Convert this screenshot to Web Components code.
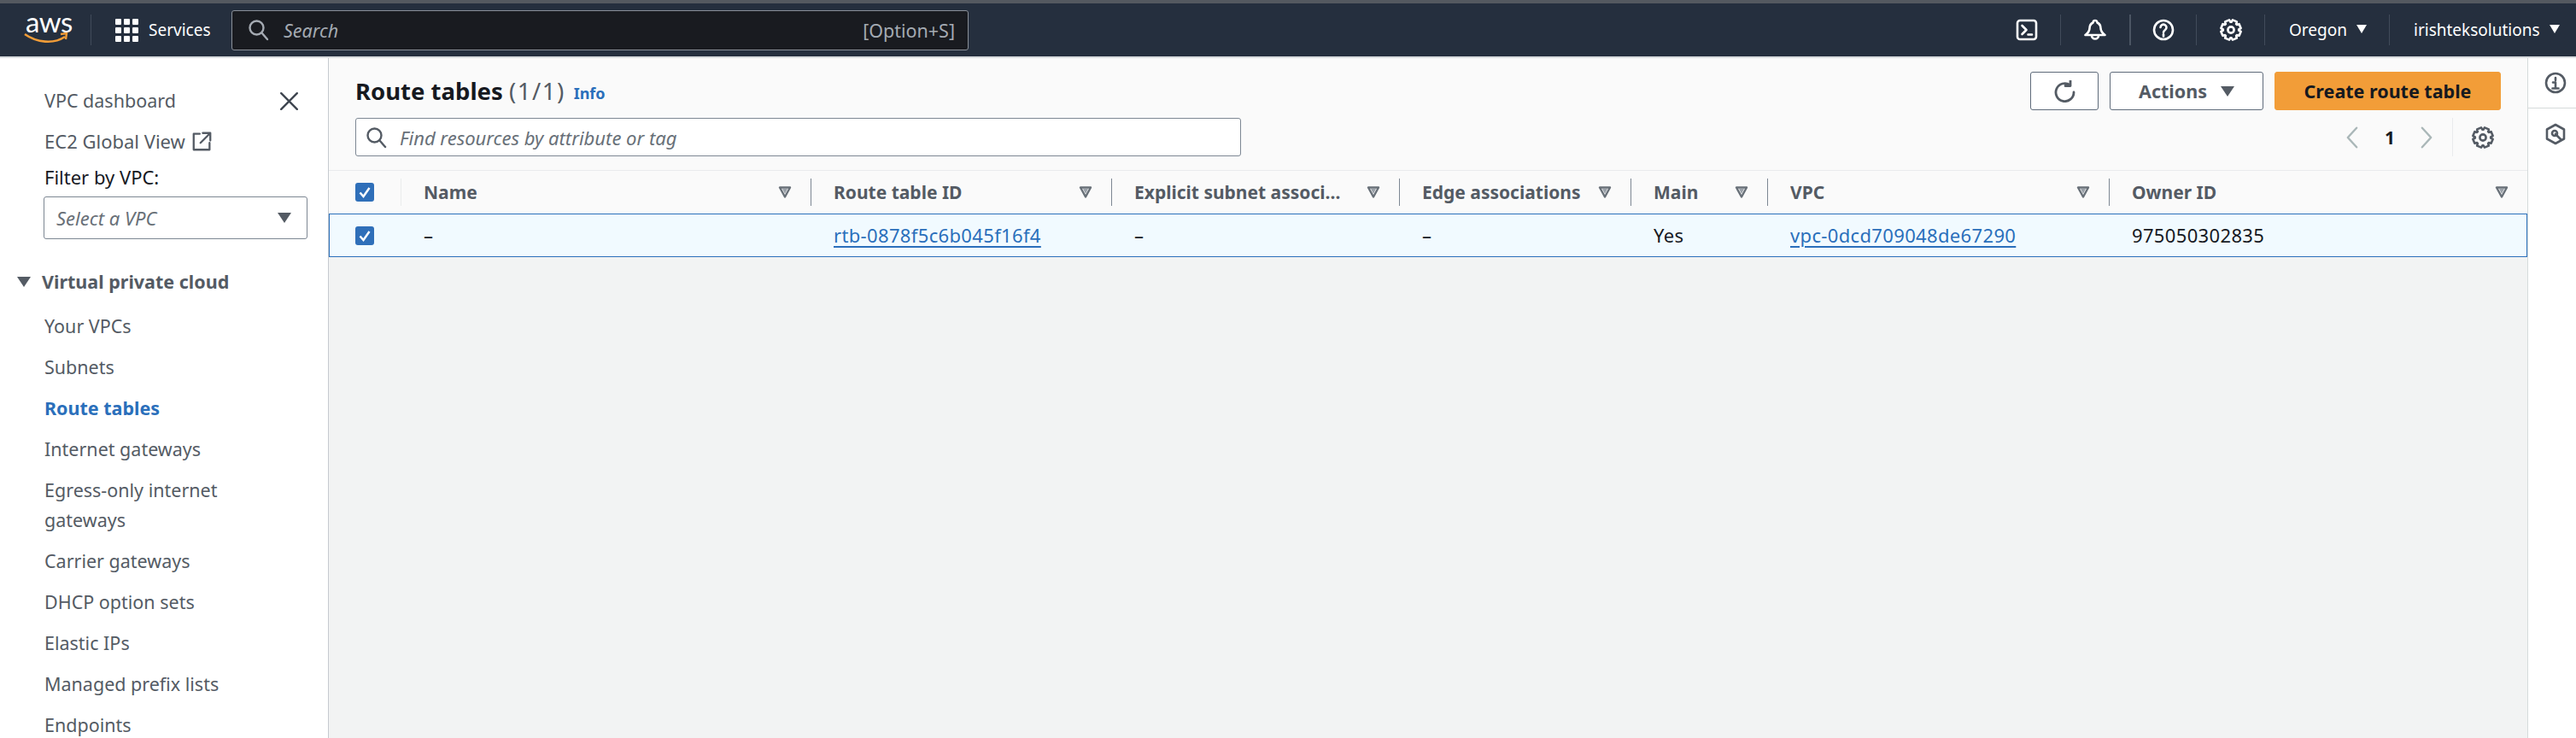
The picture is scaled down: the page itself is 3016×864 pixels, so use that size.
<!DOCTYPE html>
<html lang="en">
<head>
<meta charset="utf-8">
<title>Route tables</title>
<style>
  html, body { margin: 0; height: 100%; overflow: hidden; background: #fff; }
  body { font-family: "Noto Sans", "Open Sans", sans-serif; font-size: 21px; color: #16191f; }
</style>
</head>
<body>
<aws-console>
  <aws-topbar slot="top"></aws-topbar>
  <aws-sidenav slot="side"></aws-sidenav>
  <route-tables slot="main"></route-tables>
  <aws-rail slot="rail"></aws-rail>
</aws-console>

<script>
const ICONS = {
  search: '<circle cx="10.5" cy="10.5" r="8"/><path d="M16.5 16.5 23 24"/>',
  terminal: '<rect x="2" y="2" width="22" height="22" rx="3"/><path d="M7.5 8l5 5-5 5M14.5 18.5H19"/>',
  bell: '<path d="M13 2c-1.5 0-2.500 1-2.500 2.500C7.500 6 6.500 8.500 6.500 11c0 3-1.500 5.500-5 8h23c-3.500-2.500-5-5-5-8 0-2.500-1-5-4-6.500 0-1.500-1-2.500-2.500-2.500z"/><path d="M9 19.500a4 4 0 0 0 8 0"/>',
  help: '<circle cx="13" cy="13" r="11"/><path d="M9.500 10a3.500 3.500 0 1 1 5.500 3c-1.300.9-2 1.500-2 3"/><path d="M13 18.200v2.200"/>',
  close: '<path d="M1.500 1.500 24.500 24.500M24.500 1.500 1.500 24.500"/>',
  ext: '<path d="M10 3H2v21h21v-9"/><path d="M14 2h10v10M24 2 11 15"/>',
  refresh: '<path d="M19.500 5.500A10.500 10.500 0 1 0 24 14"/><path d="M20 .5v6h-6"/>',
  prev: '<path d="M14 1 3 13l11 12"/>',
  next: '<path d="M2 1l11 12L2 25"/>',
  info: '<circle cx="13" cy="13" r="11"/><path d="M13 7v3M10 12.500h3V19M9.500 19.500h7"/>',
  hex: '<path d="M13 2 23 7.500v11L13 24 3 18.500v-11z"/><circle cx="12" cy="12" r="3"/><path d="M13 13l6 6"/>'
};

function cogPath() {
  const pts = [];
  const p = (r, t) => `${(13 + r * Math.cos(t)).toFixed(2)} ${(13 + r * Math.sin(t)).toFixed(2)}`;
  for (let i = 0; i < 8; i++) {
    const a = i * Math.PI / 4 - Math.PI / 8;
    const w = Math.PI / 14;
    pts.push(p(9.2, a - w * 1.5), p(11.8, a - w), p(11.8, a + w), p(9.2, a + w * 1.5));
  }
  return `<circle cx="13" cy="13" r="3.6"/><path d="M${pts.join('L')}Z"/>`;
}
ICONS.gear = cogPath();

class AwsIcon extends HTMLElement {
  connectedCallback() {
    const size = this.getAttribute('size') || 26;
    const width = this.getAttribute('w') || size;
    const box = this.getAttribute('w') ? '0 0 16 26' : '0 0 26 26';
    const weight = this.getAttribute('weight') || 2.6;
    const root = this.attachShadow({ mode: 'open' });
    root.innerHTML = `
      <style>
        :host { display: inline-flex; flex: none; color: inherit; }
        svg { display: block; fill: none; stroke: currentColor; stroke-linecap: round; stroke-linejoin: round; }
      </style>
      <svg width="${width}" height="${size}" viewBox="${box}" stroke-width="${weight}">${ICONS[this.getAttribute('name')]}</svg>`;
  }
}
customElements.define('aws-icon', AwsIcon);

class AwsConsole extends HTMLElement {
  constructor() {
    super();
    this.attachShadow({ mode: 'open' }).innerHTML = `
      <style>
        :host { display: grid; width: 3016px; height: 864px; overflow: hidden;
          grid-template-columns: 385px 2574px 57px; grid-template-rows: 68px 796px; }
        ::slotted([slot=top]) { grid-column: 1 / 4; }
      </style>
      <slot name="top"></slot><slot name="side"></slot><slot name="main"></slot><slot name="rail"></slot>`;
  }
}
customElements.define('aws-console', AwsConsole);

class AwsTopbar extends HTMLElement {
  constructor() {
    super();
    this.attachShadow({ mode: 'open' }).innerHTML = `
      <style>
        :host { display: flex; box-sizing: border-box; height: 68px; align-items: center; color: #fff;
          background: #252f3e; border-top: 4px solid #545960; border-bottom: 2px solid #d9dcdf; font-size: 19px; }
        .logo { width: 106px; box-sizing: border-box; padding-left: 28px; }
        .logo .word { display: block; font: 400 33px/24px Lato, "Noto Sans", sans-serif; letter-spacing: -.5px; margin-top: -6px; padding-left: 2px; }
        .logo svg { display: block; margin-top: 1px; }
        .sep { width: 1px; height: 36px; background: #414b5a; flex: none; }
        .sep.thick { width: 2px; background: #4b5563; }
        .services { display: flex; align-items: center; gap: 12px; width: 164px; box-sizing: border-box; padding-left: 28px; }
        .grid { display: grid; grid-template-columns: repeat(3, 7px); gap: 3px; width: 27px; }
        .grid i { height: 7px; background: #fff; border-radius: 1px; }
        .search { width: 863px; height: 47px; box-sizing: border-box; display: flex; align-items: center; padding: 0 15px 0 18px;
          background: #191b20; border: 1px solid #8a9099; border-radius: 3px; color: #a4aab2; font-size: 21.500px; }
        .search span { font-style: italic; margin-left: 16px; flex: 1; }
        .cell { width: 79px; flex: none; display: flex; justify-content: center; }
        .menu { display: flex; align-items: center; flex: none; box-sizing: border-box; }
        .caret { width: 0; height: 0; border: 6px solid transparent; border-top: 10px solid #fff; border-bottom: 0; margin-left: 11px; margin-top: -2px; }
      </style>
      <div class="logo">
        <span class="word">aws</span>
        <svg width="52" height="14" viewBox="0 0 52 14" fill="none"><path d="M1 2c14 10 34 12 47 3" stroke="#f29d38" stroke-width="2.600"/><path d="M43 2l7-1-1 7" stroke="#f29d38" stroke-width="2.400"/></svg>
      </div>
      <div class="sep"></div>
      <div class="services"><div class="grid">${'<i></i>'.repeat(9)}</div><span>Services</span></div>
      <div class="search"><aws-icon name="search" weight="2.400"></aws-icon><span>Search</span>[Option+S]</div>
      <div class="cell" style="margin-left:1199px"><aws-icon name="terminal"></aws-icon></div><div class="sep"></div>
      <div class="cell" style="width:80px"><aws-icon name="bell"></aws-icon></div><div class="sep thick"></div>
      <div class="cell" style="width:76px"><aws-icon name="help"></aws-icon></div><div class="sep"></div>
      <div class="cell"><aws-icon name="gear"></aws-icon></div><div class="sep"></div>
      <div class="menu" style="width:145px;padding-left:28px">Oregon<span class="caret"></span></div><div class="sep"></div>
      <div class="menu" style="padding-left:28px">irishteksolutions<span class="caret"></span></div>`;
  }
}
customElements.define('aws-topbar', AwsTopbar);

class NavItem extends HTMLElement {
  constructor() {
    super();
    this.attachShadow({ mode: 'open' }).innerHTML = `
      <style>
        :host { display: block; line-height: 35px; padding: 6.500px 0; color: #545b64; }
        :host([active]) { color: #2a6fbb; font-weight: 700; }
      </style><slot></slot>`;
  }
}
customElements.define('nav-item', NavItem);

class AwsSidenav extends HTMLElement {
  constructor() {
    super();
    this.attachShadow({ mode: 'open' }).innerHTML = `
      <style>
        :host { display: block; box-sizing: border-box; height: 796px; overflow: hidden; background: #fff; font-size: 21.500px;
          border-right: 1px solid #c6cacf; padding: 33px 24px 0 52px; color: #545b64; }
        .head { display: flex; justify-content: space-between; align-items: center; height: 34px; line-height: 34px; padding-right: 11px; }
        .head aws-icon { color: #3f4650; }
        .ec2 { display: flex; align-items: center; gap: 8px; height: 34px; margin-top: 13px; font-size: 22px; }
        label { display: block; color: #16191f; margin-top: 8px; line-height: 34px; font-size: 22px; }
        .select { display: flex; align-items: center; justify-content: space-between; box-sizing: border-box; width: 309px; height: 50px;
          margin: 6px 0 0 -1px; padding: 0 18px 0 14px; border: 1px solid #7d8793; border-radius: 3px; font-style: italic; color: #687078; font-size: 22px; }
        .tri { width: 0; height: 0; border: 8.500px solid transparent; border-top: 12px solid #545b64; border-bottom: 0; }
        .section { display: flex; align-items: center; gap: 13px; margin: 33px 0 10px -32px; line-height: 34px; font-weight: 700; color: #545b64; }
        .section .tri { flex: none; }
        nav { width: 280px; }
      </style>
      <div class="head"><span>VPC dashboard</span><aws-icon name="close" size="21" weight="3"></aws-icon></div>
      <div class="ec2">EC2 Global View <aws-icon name="ext" size="23"></aws-icon></div>
      <label>Filter by VPC:</label>
      <div class="select">Select a VPC<span class="tri"></span></div>
      <div class="section"><span class="tri"></span>Virtual private cloud</div>
      <nav>
        <nav-item>Your VPCs</nav-item>
        <nav-item>Subnets</nav-item>
        <nav-item active>Route tables</nav-item>
        <nav-item>Internet gateways</nav-item>
        <nav-item>Egress-only internet gateways</nav-item>
        <nav-item>Carrier gateways</nav-item>
        <nav-item>DHCP option sets</nav-item>
        <nav-item>Elastic IPs</nav-item>
        <nav-item>Managed prefix lists</nav-item>
        <nav-item>Endpoints</nav-item>
      </nav>`;
  }
}
customElements.define('aws-sidenav', AwsSidenav);

class AwsButton extends HTMLElement {
  constructor() {
    super();
    this.attachShadow({ mode: 'open' }).innerHTML = `
      <style>
        :host { display: inline-flex; align-items: center; justify-content: center; box-sizing: border-box; height: 45px;
          border: 1px solid #5f6b7a; border-radius: 3px; background: #fff; color: #545b64; font-weight: 700; font-size: 21.500px; gap: 16px; flex: none; }
        :host([primary]) { background: #f29d38; border-color: #f29d38; color: #16191f; }
      </style><slot></slot>`;
  }
}
customElements.define('aws-button', AwsButton);

class TableCheck extends HTMLElement {
  constructor() {
    super();
    this.attachShadow({ mode: 'open' }).innerHTML = `
      <style>
        :host { display: block; width: 22px; height: 22px; }
        svg { display: block; }
      </style>
      <svg width="22" height="22" viewBox="0 0 22 22"><rect width="22" height="22" rx="3" fill="#2f6fb9"/><path d="M5.500 11.500l4 4.500 7-10" fill="none" stroke="#fff" stroke-width="2.500"/></svg>`;
  }
}
customElements.define('table-check', TableCheck);

class HeadCell extends HTMLElement {
  constructor() {
    super();
    this.attachShadow({ mode: 'open' }).innerHTML = `
      <style>
        :host { display: flex; align-items: center; box-sizing: border-box; height: 32px; padding: 0 22px 0 26px;
          border-left: 1px solid #7d8793; color: #545b64; font-weight: 700; gap: var(--arrow-gap, 12px); min-width: 0; }
        .label { flex: 1; min-width: 0; white-space: nowrap; overflow: hidden; text-overflow: ellipsis; }
        svg { display: block; flex: none; }
      </style>
      <span class="label"><slot></slot></span>
      <svg width="16" height="14" viewBox="0 0 16 14"><path d="M2 1.500h12L8 12.500z" fill="none" stroke="#687078" stroke-width="2.400" stroke-linejoin="round"/><path d="M5 3h6L8 9z" fill="#9aa1a9"/></svg>`;
  }
}
customElements.define('head-cell', HeadCell);

const COLUMNS = '84px 480px 352px 337px 271px 160px 400px 490px';

class RouteTables extends HTMLElement {
  constructor() {
    super();
    this.attachShadow({ mode: 'open' }).innerHTML = `
      <style>
        :host { display: flex; flex-direction: column; height: 796px; background: #f2f3f3; }
        header { background: #fafafa; padding: 16px 39px 16px 31px; }
        .row1 { display: flex; align-items: center; height: 45px; }
        h1 { margin: 0; font-size: 27.500px; font-weight: 700; color: #16191f; }
        h1 span { font-weight: 400; color: #545b64; letter-spacing: 1.500px; }
        .info { color: #2a6fbb; font-size: 18px; font-weight: 700; margin: 4px 0 0 10px; }
        .actions { margin-left: auto; display: flex; gap: 13px; margin-right: -8px; }
        .row2 { display: flex; align-items: center; height: 45px; margin-top: 9px; }
        .filter { width: 1037px; height: 45px; box-sizing: border-box; display: flex; align-items: center; gap: 14px; padding-left: 11px;
          background: #fff; border: 1px solid #7d8793; border-radius: 3px; color: #687078; font-style: italic; font-size: 22px; }
        .filter aws-icon { color: #545b64; }
        .pager { margin-left: auto; display: flex; align-items: center; color: #aab7b8; }
        .pager b { color: #16191f; font-weight: 700; margin: 0 31px; width: 11px; text-align: center; }
        .pager .sep { width: 1px; height: 45px; background: #e9ebed; margin: 0 22px; }
        .pager .gear { color: #545b64; }
        .thead, .tbody { display: grid; grid-template-columns: ${COLUMNS}; align-items: center; box-sizing: border-box; }
        .thead { height: 51px; background: #fafafa; border-top: 1px solid #e9ebed; }
        .thead head-cell:first-of-type { border-left-color: #eaeded; }
        .check { padding-left: 31px; }
        .tbody { height: 51px; background: #f1faff; border: 1px solid #2a6fbb; grid-template-columns: 83px 480px 352px 337px 271px 160px 400px 489px;
          font-size: 22px; letter-spacing: .35px; }
        .tbody > * { padding-left: 27px; min-width: 0; margin-top: -2px; }
        .tbody .check { padding-left: 30px; margin-top: 0; }
        a { color: #2a6fbb; text-decoration: underline; text-decoration-thickness: 2px; text-underline-offset: 4px; }
      </style>
      <header>
        <div class="row1">
          <h1>Route tables <span>(1/1)</span></h1><span class="info">Info</span>
          <div class="actions">
            <aws-button style="width:80px"><aws-icon name="refresh" size="26" weight="2.800"></aws-icon></aws-button>
            <aws-button style="width:180px">Actions <span style="width:0;height:0;border:8.500px solid transparent;border-top:12px solid #545b64;border-bottom:0"></span></aws-button>
            <aws-button primary style="width:265px">Create route table</aws-button>
          </div>
        </div>
        <div class="row2">
          <div class="filter"><aws-icon name="search" weight="2.400"></aws-icon>Find resources by attribute or tag</div>
          <div class="pager">
            <aws-icon name="prev" size="26" w="15" weight="2.600"></aws-icon><b>1</b><aws-icon name="next" size="26" w="15" weight="2.600"></aws-icon>
            <span class="sep"></span><aws-icon class="gear" name="gear"></aws-icon>
          </div>
        </div>
      </header>
      <div class="thead">
        <div class="check"><table-check></table-check></div>
        <head-cell>Name</head-cell>
        <head-cell>Route table ID</head-cell>
        <head-cell style="--arrow-gap:21px">Explicit subnet associations</head-cell>
        <head-cell>Edge associations</head-cell>
        <head-cell>Main</head-cell>
        <head-cell>VPC</head-cell>
        <head-cell>Owner ID</head-cell>
      </div>
      <div class="tbody">
        <div class="check"><table-check></table-check></div>
        <div>–</div>
        <div><a>rtb-0878f5c6b045f16f4</a></div>
        <div>–</div>
        <div>–</div>
        <div>Yes</div>
        <div><a>vpc-0dcd709048de67290</a></div>
        <div>975050302835</div>
      </div>`;
  }
}
customElements.define('route-tables', RouteTables);

class AwsRail extends HTMLElement {
  constructor() {
    super();
    this.attachShadow({ mode: 'open' }).innerHTML = `
      <style>
        :host { display: block; box-sizing: border-box; height: 796px; background: #fff; border-left: 1px solid #d5dbdb; color: #545b64; }
        div { display: flex; justify-content: center; box-sizing: border-box; padding-left: 8px; }
        .a { height: 59px; padding-top: 16px; border-bottom: 1px solid #d5dbdb; }
        .b { padding-top: 17px; }
      </style>
      <div class="a"><aws-icon name="info"></aws-icon></div>
      <div class="b"><aws-icon name="hex"></aws-icon></div>`;
  }
}
customElements.define('aws-rail', AwsRail);
</script>
</body>
</html>
